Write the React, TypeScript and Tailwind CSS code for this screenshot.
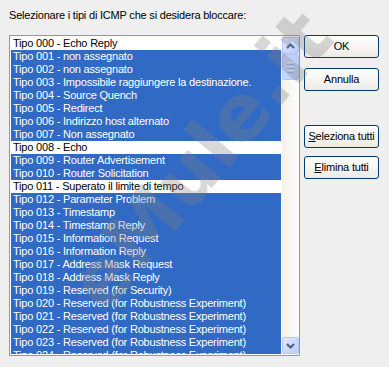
import React from "react";

const items: [string, string, boolean][] = [
  ["000", "Echo Reply", false],
  ["001", "non assegnato", true],
  ["002", "non assegnato", true],
  ["003", "Impossibile raggiungere la destinazione.", true],
  ["004", "Source Quench", true],
  ["005", "Redirect", true],
  ["006", "Indirizzo host alternato", true],
  ["007", "Non assegnato", true],
  ["008", "Echo", false],
  ["009", "Router Advertisement", true],
  ["010", "Router Solicitation", true],
  ["011", "Superato il limite di tempo", false],
  ["012", "Parameter Problem", true],
  ["013", "Timestamp", true],
  ["014", "Timestamp Reply", true],
  ["015", "Information Request", true],
  ["016", "Information Reply", true],
  ["017", "Address Mask Request", true],
  ["018", "Address Mask Reply", true],
  ["019", "Reserved (for Security)", true],
  ["020", "Reserved (for Robustness Experiment)", true],
  ["021", "Reserved (for Robustness Experiment)", true],
  ["022", "Reserved (for Robustness Experiment)", true],
  ["023", "Reserved (for Robustness Experiment)", true],
  ["024", "Reserved (for Robustness Experiment)", true],
];

function ScrollBtn({ up }: { up: boolean }) {
  return (
    <div className="h-[17px] w-[17px] rounded-[2px] border border-[#b4c8f6] bg-gradient-to-br from-[#e2ebfe] to-[#b7cbf6] flex items-center justify-center">
      <svg width="9" height="6" viewBox="0 0 9 6">
        <path
          d={up ? "M1 5 L4.5 1.5 L8 5" : "M1 1 L4.5 4.5 L8 1"}
          stroke="#4d6185"
          strokeWidth="2"
          fill="none"
        />
      </svg>
    </div>
  );
}

function Btn({ children }: { children: React.ReactNode }) {
  return (
    <div className="h-[23px] w-[75px] rounded-[3px] border border-[#003c74] bg-gradient-to-b from-[#ffffff] to-[#ecebe6] flex items-center justify-center text-[11px] tracking-[-0.2px] text-black">
      {children}
    </div>
  );
}

export default function App() {
  return (
    <div
      className="relative w-[389px] h-[367px] bg-[#efefef] overflow-hidden text-black"
      style={{ fontFamily: "Tahoma, 'Liberation Sans', Arial, sans-serif" }}
    >
      <div className="pl-[9px] pt-[9px] text-[11px] leading-[13px] tracking-[-0.2px]">
        Selezionare i tipi di ICMP che si desidera bloccare:
      </div>
      <div className="flex pl-[9px] pt-[13px] gap-[4px]">
        <div className="w-[291px] h-[321px] border border-[#7f9db9] bg-white flex p-[1px] pr-0">
          <div className="w-[270px] h-[317px] overflow-hidden flex flex-col">
            {items.map(([n, t, sel]) => (
              <div
                key={n}
                className={
                  "h-[13px] shrink-0 leading-[13px] text-[11px] tracking-[-0.2px] pl-[2px] whitespace-nowrap " +
                  (sel ? "bg-[#316ac5] text-white" : "bg-white text-black")
                }
              >
                Tipo {n} - {t}
              </div>
            ))}
          </div>
          <div className="ml-[1px] w-[17px] h-[317px] bg-gradient-to-r from-[#f3f1ec] to-[#fefefb] flex flex-col justify-between">
            <div className="flex flex-col">
              <ScrollBtn up />
              <div className="h-[26px] w-[17px] rounded-[2px] border border-[#b4c8f6] bg-gradient-to-r from-[#c9d8fc] to-[#b7cbf6] flex flex-col items-center justify-center gap-[1px]">
                <div className="w-[7px] h-[1px] bg-[#eef4fe]" />
                <div className="w-[7px] h-[1px] bg-[#8cb0f8]" />
                <div className="w-[7px] h-[1px] bg-[#eef4fe]" />
                <div className="w-[7px] h-[1px] bg-[#8cb0f8]" />
                <div className="w-[7px] h-[1px] bg-[#eef4fe]" />
                <div className="w-[7px] h-[1px] bg-[#8cb0f8]" />
              </div>
            </div>
            <ScrollBtn up={false} />
          </div>
        </div>
        <div className="flex flex-col">
          <Btn>OK</Btn>
          <div className="h-[10px]" />
          <Btn>Annulla</Btn>
          <div className="h-[34px]" />
          <Btn>
            <span>
              <span className="underline">S</span>eleziona tutti
            </span>
          </Btn>
          <div className="h-[8px]" />
          <Btn>
            <span>
              <span className="underline">E</span>limina tutti
            </span>
          </Btn>
        </div>
      </div>
      <div
        className="pointer-events-none absolute left-[200px] top-[160px] text-[78px] font-bold leading-none text-[#808080] opacity-30 whitespace-nowrap"
        style={{
          transform: "translate(-50%, -50%) rotate(-50deg)",
          fontFamily: "Verdana, 'DejaVu Sans', sans-serif",
        }}
      >
        eMule.it
      </div>
    </div>
  );
}
